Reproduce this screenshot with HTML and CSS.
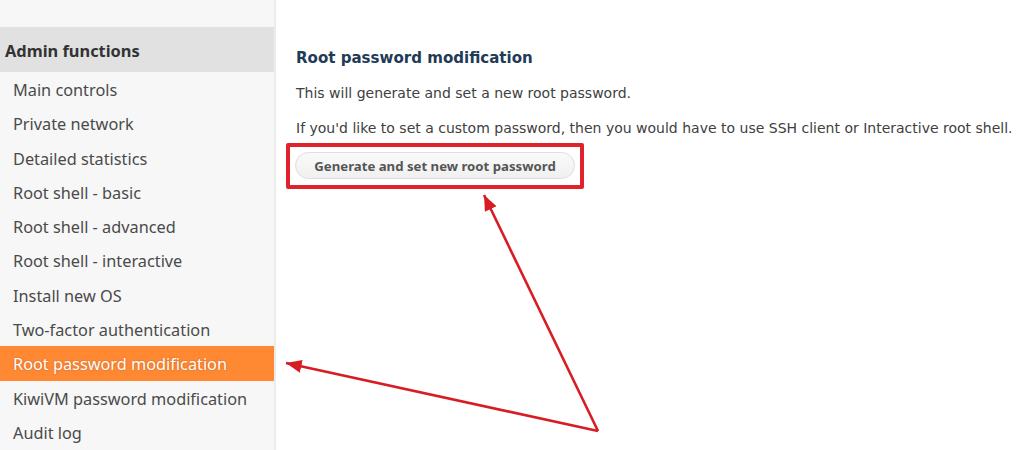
FILE: index.html
```html
<!DOCTYPE html>
<html>
<head>
<meta charset="utf-8">
<link rel="stylesheet" href="styles.css">
</head>
<body>
<div class="page">
  <aside class="sidebar">
    <div class="sidebar-top"></div>
    <div class="sidebar-title">Admin functions</div>
    <ul class="menu">
      <li class="menu-item">Main controls</li>
      <li class="menu-item">Private network</li>
      <li class="menu-item">Detailed statistics</li>
      <li class="menu-item">Root shell - basic</li>
      <li class="menu-item">Root shell - advanced</li>
      <li class="menu-item">Root shell - interactive</li>
      <li class="menu-item">Install new OS</li>
      <li class="menu-item">Two-factor authentication</li>
      <li class="menu-item active">Root password modification</li>
      <li class="menu-item">KiwiVM password modification</li>
      <li class="menu-item">Audit log</li>
    </ul>
  </aside>
  <main class="content">
    <h2 class="title">Root password modification</h2>
    <p class="text">This will generate and set a new root password.</p>
    <p class="text">If you'd like to set a custom password, then you would have to use SSH client or Interactive root shell.</p>
    <div class="highlight">
      <button class="btn">Generate and set new root password</button>
    </div>
  </main>
  <svg class="arrows" width="1024" height="450" viewBox="0 0 1024 450">
    <defs>
      <marker id="head" markerWidth="6" markerHeight="5" refX="6" refY="2.5" orient="auto" markerUnits="strokeWidth">
        <path d="M0,0 L6,2.5 L0,5 Z" fill="#d81c24"/>
      </marker>
    </defs>
    <line x1="598" y1="431" x2="484" y2="195" stroke="#d81c24" stroke-width="2.6" marker-end="url(#head)"/>
    <line x1="598" y1="431" x2="286" y2="363" stroke="#d81c24" stroke-width="2.6" marker-end="url(#head)"/>
  </svg>
</div>
</body>
</html>
```
FILE: styles.css
```css
html, body {
  margin: 0;
  padding: 0;
  background: #ffffff;
}
.page {
  position: relative;
  display: flex;
  width: 1024px;
  height: 450px;
  overflow: hidden;
}
.sidebar {
  width: 274px;
  flex: none;
  background: #f7f7f7;
  border-right: 2px solid #ececec;
  font-family: "Noto Sans", "Open Sans", sans-serif;
}
.sidebar-top {
  height: 27px;
}
.sidebar-title {
  height: 45px;
  line-height: 47px;
  background: #e1e1e1;
  padding-left: 5px;
  font-size: 16.4px;
  font-weight: bold;
  color: #333333;
}
.menu {
  list-style: none;
  margin: 0;
  padding: 0;
}
.menu-item {
  height: 34.3px;
  line-height: 36px;
  padding-left: 13px;
  font-size: 16.3px;
  color: #4a4a4a;
  white-space: nowrap;
  overflow: hidden;
}
.menu-item.active {
  background: #ff8833;
  color: #ffffff;
  text-shadow: 0 0 2px rgba(120, 50, 0, 0.45);
}
.content {
  flex: 1;
  padding-left: 20px;
  font-family: "DejaVu Sans", Verdana, sans-serif;
}
.title {
  margin: 48px 0 0 0;
  font-size: 15.05px;
  line-height: 20px;
  font-weight: bold;
  color: #1f3b57;
}
.text {
  margin: 16px 0 0 0;
  font-size: 14px;
  line-height: 19px;
  color: #404040;
  white-space: nowrap;
}
.highlight {
  margin: 5px 0 0 -10px;
  width: 285px;
  height: 33px;
  border: 4px solid #e0222b;
  border-radius: 2px;
  padding: 5px 0 0 5px;
  box-sizing: content-box;
}
.btn {
  display: block;
  width: 280px;
  height: 27px;
  border: 1px solid #dddddd;
  border-radius: 14px;
  background: linear-gradient(#fafafa, #f0f0f0);
  font-family: "Noto Sans", "Open Sans", sans-serif;
  font-size: 13.2px;
  font-weight: bold;
  color: #555555;
  padding: 0;
}
.arrows {
  position: absolute;
  left: 0;
  top: 0;
  pointer-events: none;
}
```
